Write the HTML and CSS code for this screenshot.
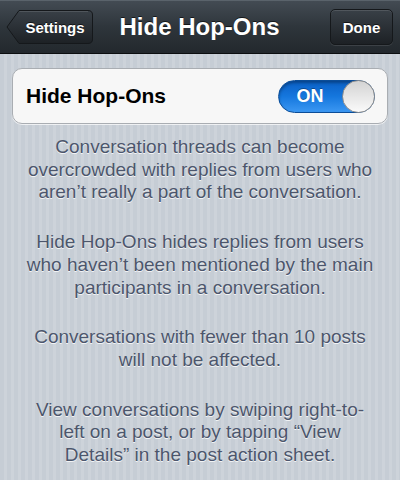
FILE: index.html
```html
<!DOCTYPE html>
<html lang="en">
<head>
    <meta charset="UTF-8">
    <meta name="viewport" content="width=device-width, initial-scale=1.0">
    <title>Hide Hop-Ons</title>
    <link rel="stylesheet" href="styles.css">
</head>
<body>
<header class="navbar">
    <a class="back">
        <svg class="back-shape" width="88" height="36" viewBox="0 0 88 36">
            <defs>
                <linearGradient id="backFill" x1="0" y1="0" x2="0" y2="1">
                    <stop offset="0" stop-color="#394047"/>
                    <stop offset="1" stop-color="#1d2125"/>
                </linearGradient>
            </defs>
            <path d="M1 18 L13 1.5 H82 Q86.5 1.5 86.5 6 V30 Q86.5 34.5 82 34.5 H13 Z" fill="url(#backFill)" stroke="#15181b" stroke-width="1"/>
            <path d="M13.5 2.5 H82" stroke="rgba(255,255,255,.12)" stroke-width="1"/>
        </svg>
        <span>Settings</span>
    </a>
    <h1 class="title">Hide Hop-Ons</h1>
    <a class="done">Done</a>
</header>
<main class="content">
    <div class="cell">
        <span class="cell-label">Hide Hop-Ons</span>
        <div class="switch">
            <span class="switch-text">ON</span>
            <span class="knob"></span>
        </div>
    </div>
    <p>Conversation threads can become overcrowded with replies from users who aren’t really a part of the conversation.</p>
    <p>Hide Hop-Ons hides replies from users who haven’t been mentioned by the main participants in a conversation.</p>
    <p>Conversations with fewer than 10 posts will not be affected.</p>
    <p>View conversations by swiping right-to-<br>left on a post, or by tapping “View<br>Details” in the post action sheet.</p>
</main>
</body>
</html>
```

FILE: styles.css
```css
html, body {
    margin: 0;
    height: 100%;
}
body {
    font-family: "Liberation Sans", Arial, sans-serif;
    background: repeating-linear-gradient(to right, #c6cdd5 0, #c6cdd5 4px, #cdd3da 4px, #cdd3da 7px);
    overflow: hidden;
}
.navbar {
    display: grid;
    grid-template-columns: 1fr auto 1fr;
    align-items: center;
    height: 54px;
    padding: 0 7px 0 6px;
    box-sizing: border-box;
    background: linear-gradient(#434b53, #2e353b 50%, #23282d);
    border-top: 1px solid #5a636b;
    border-bottom: 1px solid #0c0e10;
}
.back {
    position: relative;
    justify-self: start;
    display: flex;
    align-items: center;
    justify-content: center;
    width: 88px;
    height: 36px;
    padding-left: 10px;
    box-sizing: border-box;
    color: #fff;
    font-weight: bold;
    font-size: 15px;
    text-shadow: 0 -1px 0 rgba(0,0,0,.6);
}
.back-shape {
    position: absolute;
    left: 0;
    top: 0;
}
.back span {
    position: relative;
}
.title {
    margin: 0;
    color: #fff;
    font-size: 24px;
    font-weight: bold;
    text-shadow: 0 -1px 0 rgba(0,0,0,.6);
}
.done {
    justify-self: end;
    display: flex;
    align-items: center;
    justify-content: center;
    width: 63px;
    height: 36px;
    box-sizing: border-box;
    border: 1px solid #15181b;
    border-radius: 5px;
    background: linear-gradient(#394047, #1d2125);
    box-shadow: inset 0 1px 0 rgba(255,255,255,.12), 0 1px 0 rgba(255,255,255,.1);
    color: #fff;
    font-weight: bold;
    font-size: 15px;
    text-shadow: 0 -1px 0 rgba(0,0,0,.6);
}
.content {
    padding: 14px 12px 0;
}
.cell {
    display: flex;
    align-items: center;
    justify-content: space-between;
    height: 56px;
    padding: 0 12px 0 13px;
    box-sizing: border-box;
    background: #f7f7f7;
    border: 1px solid #a9adb2;
    border-radius: 10px;
    box-shadow: 0 1px 0 rgba(255,255,255,.7);
}
.cell-label {
    font-size: 21px;
    font-weight: bold;
    color: #000;
}
.switch {
    position: relative;
    display: flex;
    align-items: center;
    width: 97px;
    height: 33px;
    box-sizing: border-box;
    border: 1px solid #0b4d98;
    border-radius: 17px;
    background: linear-gradient(#0a5fc4, #1577de 50%, #3b97f2);
    box-shadow: inset 0 2px 3px rgba(0,0,0,.3);
}
.switch-text {
    width: 62px;
    text-align: center;
    color: #fff;
    font-size: 18px;
    font-weight: bold;
    text-shadow: 0 -1px 0 rgba(0,0,0,.35);
}
.knob {
    position: absolute;
    right: -1px;
    top: -1px;
    width: 33px;
    height: 33px;
    box-sizing: border-box;
    border-radius: 50%;
    border: 1px solid #8e8e8e;
    background: linear-gradient(#d3d3d3, #fafafa);
}
.content p {
    margin: 12px 0 0;
    padding: 0 8px;
    text-align: center;
    color: #4c566c;
    font-size: 19px;
    line-height: 22.7px;
    text-shadow: 0 1px 0 rgba(255,255,255,.8);
}
.content p + p {
    margin-top: 27px;
}
```
